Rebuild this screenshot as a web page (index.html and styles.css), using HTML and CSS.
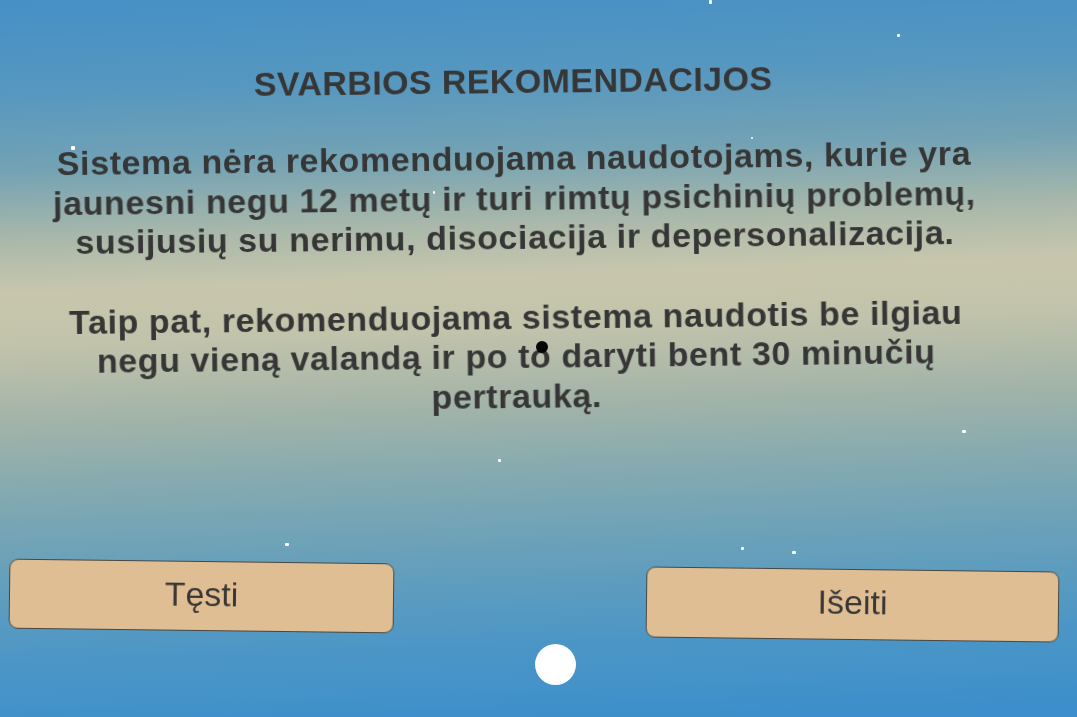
FILE: index.html
```html
<!DOCTYPE html>
<html lang="lt">
<head>
<meta charset="utf-8">
<title>Svarbios rekomendacijos</title>
<link rel="stylesheet" href="styles.css">
</head>
<body>
<div class="scene">
  <div class="panel">
    <h1 class="title">SVARBIOS REKOMENDACIJOS</h1>
    <p class="para">Sistema nėra rekomenduojama naudotojams, kurie yra<br>jaunesni negu 12 metų ir turi rimtų psichinių problemų,<br>susijusių su nerimu, disociacija ir depersonalizacija.</p>
    <p class="para para-2">Taip pat, rekomenduojama sistema naudotis be ilgiau<br>negu vieną valandą ir po to daryti bent 30 minučių<br>pertrauką.</p>
  </div>
  <div class="actions">
    <button class="btn btn-continue">Tęsti</button>
    <button class="btn btn-exit">Išeiti</button>
  </div>

  <span class="star s1"></span>
  <span class="star s2"></span>
  <span class="star s3"></span>
  <span class="star s4"></span>
  <span class="star s5"></span>
  <span class="star s6"></span>
  <span class="star s7"></span>
  <span class="star s8"></span>
  <span class="star s9"></span>
  <span class="star s10"></span>
  <span class="reticle"></span>
  <span class="pointer"></span>
</div>
</body>
</html>
```

FILE: styles.css
```css
html, body {
  margin: 0;
  padding: 0;
}

body {
  width: 1077px;
  height: 717px;
  overflow: hidden;
  font-family: "Liberation Sans", Arial, sans-serif;
}

.scene {
  position: relative;
  width: 1077px;
  height: 717px;
  overflow: hidden;
  display: flex;
  flex-direction: column;
  background: linear-gradient(178deg,
    #4690c6 0px,
    #5597c0 90px,
    #73a2b4 170px,
    #a9b8aa 240px,
    #c8c7ad 295px,
    #c2c3ab 345px,
    #a3b4a8 420px,
    #85aab0 490px,
    #68a0ba 570px,
    #4c96c6 660px,
    #3a8ecc 754px);
}

.panel {
  width: 1030px;
  text-align: center;
  color: #363636;
  transform: rotate(-0.65deg);
  transform-origin: 515px 250px;
  filter: blur(0.4px);
}

.title {
  margin: 61px 0 0;
  font-size: 34px;
  line-height: 40px;
  font-weight: 700;
  letter-spacing: 0.4px;
}

.para {
  margin: 38px 0 0;
  font-size: 34px;
  line-height: 39.5px;
  font-weight: 700;
  letter-spacing: 0.6px;
}

.para-2 {
  margin-top: 40px;
}

.actions {
  display: flex;
  justify-content: space-between;
  align-items: flex-start;
  padding: 0 18px 0 8px;
  margin-top: 145px;
}

.btn {
  box-sizing: border-box;
  background: #dfbe94;
  border: 1.5px solid #4a4640;
  border-radius: 9px;
  color: #3a3836;
  font-family: "Liberation Sans", Arial, sans-serif;
  font-size: 34px;
  font-weight: 400;
  padding: 0 0 4px;
  transform: rotate(0.7deg);
  filter: blur(0.4px);
}

.btn-continue {
  width: 385px;
  height: 70px;
  margin-left: 1px;
}

.btn-exit {
  width: 413px;
  height: 71px;
  margin-top: 8px;
}

.star {
  position: absolute;
  width: 3px;
  height: 3px;
  background: #ffffff;
  border-radius: 1px;
}

.s1 { left: 709px; top: 0px; height: 4px; }
.s2 { left: 897px; top: 34px; }
.s3 { left: 751px; top: 137px; width: 2px; height: 2px; }
.s4 { left: 71px; top: 146px; width: 4px; height: 4px; }
.s5 { left: 433px; top: 191px; width: 2px; }
.s6 { left: 498px; top: 459px; }
.s7 { left: 962px; top: 430px; width: 4px; }
.s8 { left: 285px; top: 543px; width: 4px; }
.s9 { left: 741px; top: 547px; }
.s10 { left: 792px; top: 551px; width: 4px; }

.reticle {
  position: absolute;
  left: 536px;
  top: 341px;
  width: 12px;
  height: 12px;
  border-radius: 50%;
  background: #050505;
}

.pointer {
  position: absolute;
  left: 535px;
  top: 644px;
  width: 41px;
  height: 41px;
  border-radius: 50%;
  background: #ffffff;
}
```
